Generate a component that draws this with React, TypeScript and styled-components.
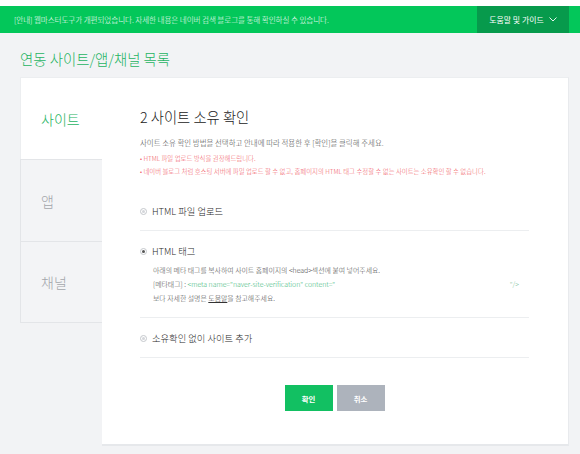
import React from "react";
import styled, { createGlobalStyle } from "styled-components";

const GlobalStyle = createGlobalStyle`
  html, body { margin: 0; padding: 0; }
  body {
    background: #f2f3f5;
    font-family: "Noto Sans CJK KR", "Noto Sans", sans-serif;
    color: #333;
  }
  * { box-sizing: border-box; }
`;

const TopStrip = styled.div`
  height: 6px;
  background: #ffffff;
`;

const NoticeBar = styled.div`
  height: 27px;
  background: #03c75a;
  display: flex;
  align-items: stretch;
  justify-content: space-between;
  padding-left: 14px;
  padding-right: 11px;
`;

const NoticeText = styled.div`
  display: flex;
  align-items: center;
  font-size: 7.6px;
  font-weight: 300;
  color: #ffffff;
  letter-spacing: -0.1px;
`;

const HelpButton = styled.div`
  width: 92px;
  background: #079a4c;
  display: flex;
  align-items: center;
  justify-content: center;
  gap: 5px;
  font-size: 7.9px;
  color: #ffffff;
`;

const Main = styled.div`
  padding: 0 11px 0 20px;
`;

const PageTitle = styled.h1`
  margin: 0;
  height: 44px;
  padding-top: 6px;
  display: flex;
  align-items: center;
  font-size: 14.4px;
  font-weight: 300;
  color: #1eb462;
`;

const Layout = styled.div`
  display: flex;
  align-items: flex-start;
`;

const SideNav = styled.nav`
  width: 82px;
  display: flex;
  flex-direction: column;
`;

const SideTab = styled.div<{ $active?: boolean }>`
  height: 82px;
  display: flex;
  align-items: center;
  padding-left: 20px;
  font-size: 14px;
  font-weight: 300;
  background: ${(p) => (p.$active ? "#ffffff" : "#f3f4f6")};
  color: ${(p) => (p.$active ? "#1eb462" : "#a3a6ab")};
  border-left: 1px solid ${(p) => (p.$active ? "#eceef0" : "#e3e5e8")};
  border-top: 1px solid ${(p) => (p.$active ? "#eceef0" : "#e3e5e8")};
  & + & {
    border-top: 1px solid #e3e5e8;
  }
  &:last-child {
    border-bottom: 1px solid #e3e5e8;
  }
`;

const Content = styled.section`
  flex: 1;
  height: 369px;
  background: #ffffff;
  border-top: 1px solid #eceef0;
  border-right: 1px solid #e8eaed;
  border-bottom: 2px solid #e6e8eb;
  padding: 29px 39px 0 38px;
`;

const StepTitle = styled.h2`
  margin: 0;
  font-size: 14.3px;
  line-height: 20px;
  font-weight: 300;
  color: #222;
`;

const Desc = styled.p`
  margin: 10px 0 3px;
  font-size: 7.45px;
  line-height: 12px;
  font-weight: 300;
  color: #444;
`;

const Warn = styled.p`
  margin: 0;
  font-size: 6.4px;
  line-height: 13px;
  font-weight: 300;
  color: #f0535b;
`;

const OptionList = styled.div`
  margin-top: 13px;
`;

const Option = styled.div`
  padding: 13px 0 12px;
  border-bottom: 1px solid #eceef0;
`;

const OptionRow = styled.label`
  display: flex;
  align-items: center;
  gap: 5px;
  height: 14px;
  font-size: 9.3px;
  font-weight: 300;
  color: #2a2a2a;
`;

const Radio = styled.span<{ $checked?: boolean }>`
  width: 7px;
  height: 7px;
  border-radius: 50%;
  border: 1px solid #c4c7cc;
  display: flex;
  align-items: center;
  justify-content: center;
  &::after {
    content: "";
    width: 3px;
    height: 3px;
    border-radius: 50%;
    background: ${(p) => (p.$checked ? "#555" : "#d4d6da")};
  }
`;

const OptionBody = styled.div`
  margin-top: 5px;
  padding-left: 13px;
  padding-right: 10px;
`;

const BodyLine = styled.div`
  display: flex;
  align-items: center;
  justify-content: space-between;
  height: 14px;
  font-size: 6.9px;
  font-weight: 300;
  color: #444;
`;

const Meta = styled.span`
  color: #3db77a;
`;

const MetaEnd = styled.span`
  color: #7dbf9b;
`;

const HelpLink = styled.span`
  text-decoration: underline;
  color: #333;
`;

const ButtonRow = styled.div`
  margin-top: 27px;
  display: flex;
  justify-content: center;
  gap: 4px;
`;

const Button = styled.button<{ $primary?: boolean }>`
  width: 48px;
  height: 26px;
  border: 0;
  padding: 0;
  font-family: inherit;
  font-size: 7.4px;
  font-weight: 700;
  color: #ffffff;
  background: ${(p) => (p.$primary ? "#12c062" : "#adb3bc")};
`;

export default function App() {
  return (
    <>
      <GlobalStyle />
      <TopStrip />
      <NoticeBar>
        <NoticeText>
          [안내] 웹마스터도구가 개편되었습니다. 자세한 내용은 네이버 검색 블로그를 통해 확인하실 수 있습니다.
        </NoticeText>
        <HelpButton>
          도움말 및 가이드
          <svg width="8" height="5" viewBox="0 0 8 5" fill="none">
            <path d="M0.5 0.5 L4 4 L7.5 0.5" stroke="#ffffff" strokeWidth="0.9" />
          </svg>
        </HelpButton>
      </NoticeBar>
      <Main>
        <PageTitle>연동 사이트/앱/채널 목록</PageTitle>
        <Layout>
          <SideNav>
            <SideTab $active>사이트</SideTab>
            <SideTab>앱</SideTab>
            <SideTab>채널</SideTab>
          </SideNav>
          <Content>
            <StepTitle>2 사이트 소유 확인</StepTitle>
            <Desc>사이트 소유 확인 방법을 선택하고 안내에 따라 적용한 후 [확인]을 클릭해 주세요.</Desc>
            <Warn>• HTML 파일 업로드 방식을 권장해드립니다.</Warn>
            <Warn>
              • 네이버 블로그 처럼 호스팅 서버에 파일 업로드 할 수 없고, 홈페이지의 HTML 태그 수정할 수 없는 사이트는 소유확인 할 수 없습니다.
            </Warn>
            <OptionList>
              <Option>
                <OptionRow>
                  <Radio />
                  HTML 파일 업로드
                </OptionRow>
              </Option>
              <Option>
                <OptionRow>
                  <Radio $checked />
                  HTML 태그
                </OptionRow>
                <OptionBody>
                  <BodyLine>
                    <span>아래의 메타 태그를 복사하여 사이트 홈페이지의 &lt;head&gt;섹션에 붙여 넣어주세요.</span>
                  </BodyLine>
                  <BodyLine>
                    <span>
                      [메타태그] : <Meta>&lt;meta name="naver-site-verification" content="</Meta>
                    </span>
                    <MetaEnd>"/&gt;</MetaEnd>
                  </BodyLine>
                  <BodyLine>
                    <span>
                      보다 자세한 설명은 <HelpLink>도움말</HelpLink>을 참고해주세요.
                    </span>
                  </BodyLine>
                </OptionBody>
              </Option>
              <Option>
                <OptionRow>
                  <Radio />
                  소유확인 없이 사이트 추가
                </OptionRow>
              </Option>
            </OptionList>
            <ButtonRow>
              <Button $primary>확인</Button>
              <Button>취소</Button>
            </ButtonRow>
          </Content>
        </Layout>
      </Main>
    </>
  );
}
